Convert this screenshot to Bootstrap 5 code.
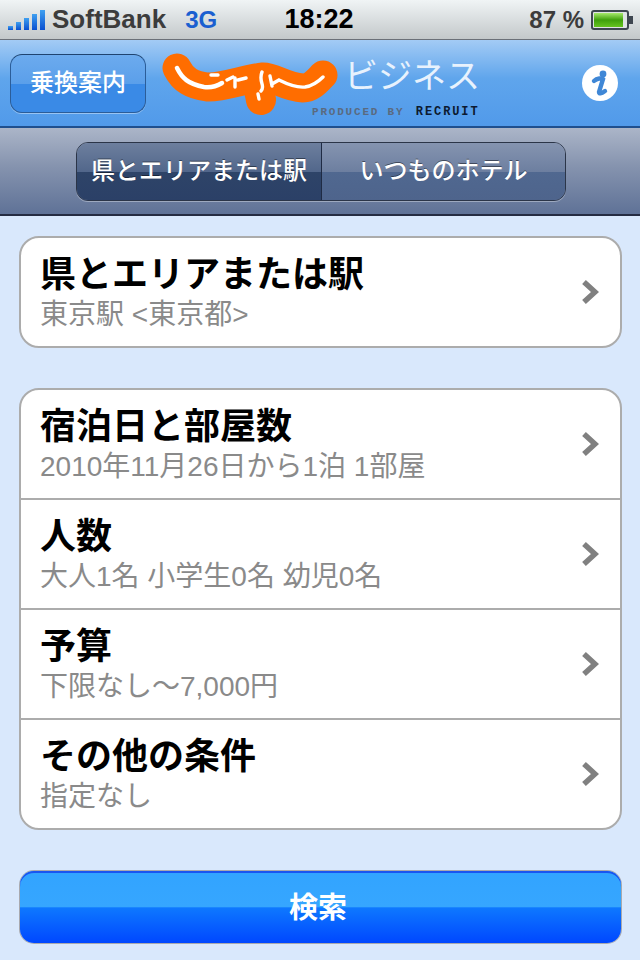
<!DOCTYPE html>
<html lang="ja">
<head>
  <meta charset="UTF-8">
  <title>じゃらん ビジネス</title>
  <meta name="viewport" content="width=device-width, initial-scale=1.0">
  <link href="https://cdn.jsdelivr.net/npm/bootstrap@5.3.3/dist/css/bootstrap.min.css" rel="stylesheet">
  <style>
    html, body { height: 960px; overflow: hidden; }
    body {
      width: 640px;
      background: #d9e8fc;
      font-family: "Liberation Sans", "Noto Sans CJK JP", sans-serif;
    }

    /* status bar */
    .status-bar {
      height: 40px;
      padding: 0 6px 0 8px;
      background: linear-gradient(#f0f4f5, #c3c8ca);
      border-bottom: 1px solid #6b7078;
      color: #3c3c3c;
      font-size: 26px;
      font-weight: 700;
    }
    .status-left { width: 240px; }
    .net-type { color: #1a5fd0; font-size: 24px; margin-left: 19px; }
    .clock { color: #000; font-size: 27px; width: 142px; text-align: center; }
    .status-right { flex: 1; }
    .batt-text { font-size: 24px; margin-right: 7px; }

    /* header */
    .top-bar {
      height: 88px;
      padding: 0 10px;
      background: linear-gradient(#a3cbf5, #5fa5ec 45%, #519aea);
      border-bottom: 2px solid #1f4f8e;
    }
    .transfer-btn {
      width: 136px;
      height: 59px;
      padding: 0;
      color: #fff;
      font-size: 24px;
      font-weight: 500;
      background: linear-gradient(#6cabee, #5b9fea 50%, #3a8ae6 51%, #3a8ae6);
      border: 1px solid #2b5d99;
      border-top-color: #1f4470;
      border-radius: 12px;
      box-shadow: 0 1px 0 rgba(255,255,255,.4);
    }
    .logo-box { width: 330px; margin-left: 7px; height: 86px; position: relative; }
    .logo-blob { position: absolute; left: 0; top: 0; }
    .logo-biz {
      position: absolute; left: 191px; top: 16px;
      color: #e8f2fd; font-size: 34px; line-height: 40px;
      font-weight: 400;
    }
    .logo-by {
      position: absolute; left: 159px; top: 66px;
      font-family: "Liberation Mono", monospace;
      font-size: 11px; line-height: 12px; font-weight: 700;
      letter-spacing: 1.8px; color: #5a6a80;
      white-space: nowrap;
    }
    .logo-by b { color: #0c1a30; font-size: 12px; letter-spacing: 1.9px; margin-left: 3px; }
    .info-btn { margin-left: auto; margin-right: 11px; }

    /* segmented bar */
    .seg-bar {
      height: 88px;
      padding-left: 2px;
      background: linear-gradient(#abb5c8, #8593ae 45%, #5f7297);
      border-bottom: 2px solid #252c42;
    }
    .seg-group {
      width: 490px;
      height: 59px;
      border: 1px solid #2b3548;
      border-radius: 12px;
      overflow: hidden;
      box-shadow: 0 1px 0 rgba(255,255,255,.35);
    }
    .seg-item {
      color: #fff;
      font-size: 24px;
      font-weight: 500;
      text-shadow: 0 -1px 0 rgba(0,0,0,.45);
    }
    .seg-on {
      width: 245px;
      background: linear-gradient(#6d7f9e, #52678b 50%, #2e4468 51%, #2b4067);
      border-right: 1px solid #1f2b44;
    }
    .seg-off {
      flex: 1;
      background: linear-gradient(#8594b0, #6d7fa0 50%, #506890 51%, #4e648c);
    }

    /* grouped lists */
    .group-box {
      margin: 0 18px 0 19px;
      background: #fff;
      border: 2px solid #acacac;
      border-radius: 20px;
      overflow: hidden;
    }
    .first-group { margin-top: 20px; }
    .second-group { margin-top: 40px; }
    .cell {
      height: 110px;
      padding: 0 21px 0 19px;
      border-bottom: 2px solid #acacac;
    }
    .cell:last-child { border-bottom: 0; height: 108px; }
    .cell-title {
      color: #000;
      font-size: 36px;
      line-height: 45px;
      font-weight: 700;
    }
    .cell-sub {
      color: #8a8a8a;
      font-size: 28px;
      line-height: 35px;
    }

    /* search */
    .search-btn {
      display: block;
      width: 601px;
      height: 72px;
      margin: 41px 0 0 20px;
      padding: 3px 5px 0 0;
      color: #fff;
      font-size: 29px;
      font-weight: 700;
      background: linear-gradient(#32a4ff, #36a6ff 50%, #0e78ff 51%, #0047ff);
      border: 0;
      border-radius: 14px;
      box-shadow: 0 0 0 1px #a9a9ae, inset 0 2px 0 #1a55f0;
    }
    .search-btn:hover, .search-btn:active { color: #fff; background: linear-gradient(#32a4ff, #36a6ff 50%, #0e78ff 51%, #0047ff); }
  </style>
</head>
<body>

  <!-- Status bar -->
  <div class="status-bar d-flex align-items-center">
    <div class="status-left d-flex align-items-center">
      <svg width="40" height="22" viewBox="0 0 40 22">
        <defs><linearGradient id="sig" x1="0" y1="0" x2="0" y2="1"><stop offset="0" stop-color="#3fa0f0"/><stop offset="1" stop-color="#0a4fd0"/></linearGradient></defs>
        <rect x="0" y="17" width="5" height="4" fill="url(#sig)"/>
        <rect x="8" y="13" width="5" height="8" fill="url(#sig)"/>
        <rect x="16" y="9" width="5" height="12" fill="url(#sig)"/>
        <rect x="24" y="5" width="5" height="16" fill="url(#sig)"/>
        <rect x="32" y="1" width="5" height="20" fill="url(#sig)"/>
      </svg>
      <span class="ms-1">SoftBank</span>
      <span class="net-type">3G</span>
    </div>
    <div class="clock">18:22</div>
    <div class="status-right d-flex align-items-center justify-content-end">
      <span class="batt-text">87 %</span>
      <svg width="43" height="20" viewBox="0 0 43 20">
        <defs><linearGradient id="bat" x1="0" y1="0" x2="0" y2="1"><stop offset="0" stop-color="#a6e86c"/><stop offset=".5" stop-color="#3f9f0c"/><stop offset="1" stop-color="#65c41f"/></linearGradient></defs>
        <rect x="1" y="1" width="36" height="18" rx="2" fill="#dfe3e4" stroke="#3e4650" stroke-width="2"/>
        <rect x="3" y="3" width="29" height="14" fill="url(#bat)"/>
        <rect x="38" y="6" width="4" height="8" fill="#3e4650"/>
      </svg>
    </div>
  </div>

  <!-- Header -->
  <div class="top-bar d-flex align-items-center">
    <button type="button" class="btn transfer-btn">乗換案内</button>
    <div class="logo-box">
      <svg class="logo-blob" width="190" height="80" viewBox="153 40 190 80">
        <path d="M177 68 C183 80 192 85 207 87 C222 88 245 79 263 77 C275 77 285 87 303 88 C312 88 318 80 323 75" fill="none" stroke="#ff6d00" stroke-width="29" stroke-linecap="round" stroke-linejoin="round"/>
        <path d="M258 85 L261 100" fill="none" stroke="#ff6d00" stroke-width="30" stroke-linecap="round"/>
        <path d="M177 68 C182 78 188 84 204 87 C211 88 217 86 222 83" fill="none" stroke="#fff" stroke-width="4.5" stroke-linecap="round"/>
        <path d="M211 75 L218 75 M227 80 L233 77 M235 78 L235 87 M238 80 L246 78 M262 72 C258 82 266 86 261 91 M258 94 L259 99 M270 76 L272 86 M272 84 L279 80 C287 84 296 88 305 87 C312 86 318 82 323 77" fill="none" stroke="#fff" stroke-width="3.4" stroke-linecap="round"/>
      </svg>
      <span class="logo-biz">ビジネス</span>
      <span class="logo-by">PRODUCED BY <b>RECRUIT</b></span>
    </div>
    <svg class="info-btn" width="38" height="38" viewBox="0 0 38 38">
      <circle cx="19" cy="19" r="18" fill="#fff"/>
      <circle cx="22" cy="10" r="3.4" fill="#3f87d6"/>
      <path d="M13 17 C16 14 21 14 22 15 L18 28 C18 30 20 30 24 27" fill="none" stroke="#3f87d6" stroke-width="4.4" stroke-linecap="round"/>
    </svg>
  </div>

  <!-- Segmented control -->
  <div class="seg-bar d-flex align-items-center justify-content-center">
    <div class="seg-group d-flex">
      <div class="seg-item seg-on d-flex align-items-center justify-content-center">県とエリアまたは駅</div>
      <div class="seg-item seg-off d-flex align-items-center justify-content-center">いつものホテル</div>
    </div>
  </div>

  <!-- Area -->
  <div class="group-box first-group">
    <div class="cell d-flex align-items-center justify-content-between">
      <div>
        <div class="cell-title">県とエリアまたは駅</div>
        <div class="cell-sub">東京駅 &lt;東京都&gt;</div>
      </div>
      <svg width="18" height="26" viewBox="0 0 18 26"><path d="M3 3 L14 13 L3 23" fill="none" stroke="#808080" stroke-width="5.5"/></svg>
    </div>
  </div>

  <!-- Conditions -->
  <div class="group-box second-group">
    <div class="cell d-flex align-items-center justify-content-between">
      <div>
        <div class="cell-title">宿泊日と部屋数</div>
        <div class="cell-sub">2010年11月26日から1泊 1部屋</div>
      </div>
      <svg width="18" height="26" viewBox="0 0 18 26"><path d="M3 3 L14 13 L3 23" fill="none" stroke="#808080" stroke-width="5.5"/></svg>
    </div>
    <div class="cell d-flex align-items-center justify-content-between">
      <div>
        <div class="cell-title">人数</div>
        <div class="cell-sub">大人1名 小学生0名 幼児0名</div>
      </div>
      <svg width="18" height="26" viewBox="0 0 18 26"><path d="M3 3 L14 13 L3 23" fill="none" stroke="#808080" stroke-width="5.5"/></svg>
    </div>
    <div class="cell d-flex align-items-center justify-content-between">
      <div>
        <div class="cell-title">予算</div>
        <div class="cell-sub">下限なし～7,000円</div>
      </div>
      <svg width="18" height="26" viewBox="0 0 18 26"><path d="M3 3 L14 13 L3 23" fill="none" stroke="#808080" stroke-width="5.5"/></svg>
    </div>
    <div class="cell d-flex align-items-center justify-content-between">
      <div>
        <div class="cell-title">その他の条件</div>
        <div class="cell-sub">指定なし</div>
      </div>
      <svg width="18" height="26" viewBox="0 0 18 26"><path d="M3 3 L14 13 L3 23" fill="none" stroke="#808080" stroke-width="5.5"/></svg>
    </div>
  </div>

  <button type="button" class="btn search-btn">検索</button>

  <script src="https://cdn.jsdelivr.net/npm/bootstrap@5.3.3/dist/js/bootstrap.bundle.min.js"></script>
</body>
</html>
